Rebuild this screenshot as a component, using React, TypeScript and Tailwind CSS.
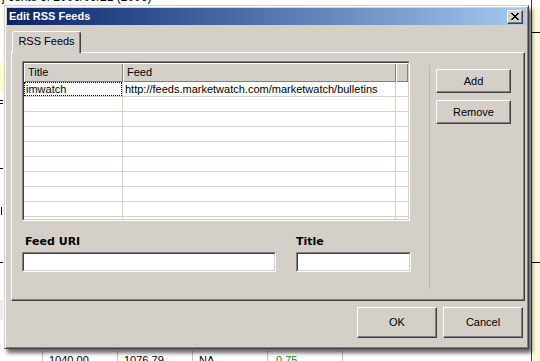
import React from "react";

const rows = Array.from({ length: 10 });

function Sunken({ className = "" }: { className?: string }) {
  return (
    <div className={`border border-t-[#808080] border-l-[#808080] border-r-white border-b-white ${className}`}>
      <div className="h-full w-full border border-t-[#404040] border-l-[#404040] border-r-[#d4d0c8] border-b-[#d4d0c8] bg-white" />
    </div>
  );
}

function Button({ label, className = "" }: { label: string; className?: string }) {
  return (
    <div
      className={`flex items-center justify-center border border-t-white border-l-white border-r-[#404040] border-b-[#404040] bg-[#d4d0c8] shadow-[inset_-1px_-1px_0_#808080] ${className}`}
    >
      {label}
    </div>
  );
}

function FeedTable() {
  return (
    <div className="h-[160px] w-[388px] border border-t-[#808080] border-l-[#808080] border-r-white border-b-white">
      <div className="flex h-full w-full flex-col overflow-hidden border border-t-[#404040] border-l-[#404040] border-r-[#d4d0c8] border-b-[#d4d0c8] bg-white">
        <div className="grid h-[19px] shrink-0 grid-cols-[99px_273px_1fr] bg-[#d4d0c8]">
          <div className="flex items-center pl-[4px] shadow-[inset_1px_1px_0_#fff,inset_-1px_-1px_0_#808080]">Title</div>
          <div className="flex items-center pl-[4px] shadow-[inset_1px_1px_0_#fff,inset_-1px_-1px_0_#808080]">Feed</div>
          <div className="shadow-[inset_1px_1px_0_#fff,inset_-1px_-1px_0_#808080]" />
        </div>
        {rows.map((_, i) => (
          <div key={i} className="grid h-[15px] shrink-0 grid-cols-[99px_273px_1fr]">
            <div className="border-r border-b border-[#d4d0c8]">
              {i === 0 && (
                <div className="flex h-full items-center border border-dotted border-black pl-[1px]">imwatch</div>
              )}
            </div>
            <div className="flex items-center border-r border-b border-[#d4d0c8] pl-[2px]">
              {i === 0 && "http://feeds.marketwatch.com/marketwatch/bulletins"}
            </div>
            <div className="border-b border-[#d4d0c8]" />
          </div>
        ))}
      </div>
    </div>
  );
}

function Backdrop() {
  return (
    <>
      <div className="absolute left-[2px] top-[-9px] whitespace-nowrap text-[12px] text-black">
        j cents of 2006/09/21 (2006)
      </div>
      <div className="absolute left-0 top-[62px] h-[30px] w-[3px] bg-[#fffbd6]" />
      <div className="absolute left-0 top-[100px] h-[1px] w-[3px] bg-black" />
      <div className="absolute left-0 top-[103px] h-[1px] w-[3px] bg-black" />
      <div className="absolute left-0 top-[168px] h-[1px] w-[3px] bg-black" />
      <div className="absolute left-[1px] top-[207px] h-[8px] w-[1px] bg-black" />
      <div className="absolute left-0 top-[262px] h-[1px] w-[3px] bg-black" />
      <div className="absolute left-0 top-[300px] h-[20px] w-[3px] bg-[#eeeeee]" />
      <div className="absolute left-[531px] top-0 h-full w-[1px] bg-[#404040]" />
      <div className="absolute left-[533px] top-[8px] h-full w-[7px] bg-[#fffbd6]" />
      <div className="absolute left-[532px] top-[32px] h-[1px] w-[8px] bg-black" />
      <div className="absolute left-[532px] top-[262px] h-[1px] w-[8px] bg-black" />
      <div className="absolute left-0 top-[351px] flex h-[10px] w-[540px] items-start whitespace-nowrap text-[11px] text-black">
        <div className="h-full w-[43px] border-r border-[#c0c0c0]" />
        <div className="h-full w-[75px] border-r border-[#c0c0c0] pl-[6px] pt-[4px]">1040.00</div>
        <div className="h-full w-[75px] border-r border-[#c0c0c0] pl-[6px] pt-[4px]">1076.79</div>
        <div className="h-full w-[75px] border-r border-[#c0c0c0] pl-[6px] pt-[4px]">NA</div>
        <div className="h-full w-[75px] border-r border-[#c0c0c0] pl-[8px] pt-[4px] text-[#1a8a1a]">0.75</div>
      </div>
    </>
  );
}

export default function App() {
  return (
    <div className="relative h-[361px] w-[540px] overflow-hidden bg-white font-['Liberation_Sans',Arial,sans-serif] text-[11px] leading-none text-black">
      <Backdrop />
      <div className="absolute left-[4px] top-[5px] flex h-[344px] w-[525px] flex-col border border-t-[#d4d0c8] border-l-[#d4d0c8] border-r-[#404040] border-b-[#404040] bg-[#d4d0c8] p-[2px] shadow-[inset_1px_1px_0_#fff,inset_-1px_-1px_0_#808080,3px_4px_4px_rgba(0,0,0,0.6)]">
        {/* title bar */}
        <div className="flex h-[17px] shrink-0 items-center justify-between bg-linear-to-r from-[#0a246a] to-[#a6caf0] pl-[2px] pr-[3px]">
          <span className="font-bold text-white">Edit RSS Feeds</span>
          <div className="flex h-[14px] w-[16px] items-center justify-center border border-t-white border-l-white border-r-[#404040] border-b-[#404040] bg-[#d4d0c8] shadow-[inset_-1px_-1px_0_#808080]">
            <svg width="8" height="7" viewBox="0 0 8 7" shapeRendering="crispEdges">
              <path d="M0 0h2v1h1v1h2v-1h1v-1h2v1h-1v1h-1v1h-1v1h1v1h1v1h1v1h-2v-1h-1v-1h-2v1h-1v1h-2v-1h1v-1h1v-1h1v-1h-1v-1h-1v-1h-1z" fill="#000" />
            </svg>
          </div>
        </div>

        {/* tab strip */}
        <div className="mt-[6px] flex pl-[5px]">
          <div className="relative z-10 -mb-px flex h-[22px] w-[69px] items-center justify-center rounded-t-[3px] border border-b-0 border-t-white border-l-white border-r-[#404040] bg-[#d4d0c8] pb-[2px] shadow-[inset_-1px_0_0_#808080]">
            RSS Feeds
          </div>
        </div>

        {/* tab panel */}
        <div className="ml-[4px] mr-[1px] flex h-[249px] shrink-0 border border-t-white border-l-white border-r-[#404040] border-b-[#404040] shadow-[inset_-1px_-1px_0_#808080]">
          <div className="flex flex-col pl-[10px] pt-[8px]">
            <FeedTable />
            <div className="mt-[14px] flex gap-[20px]">
              <div className="flex flex-col gap-[4px]">
                <span className="font-['DejaVu_Sans',Verdana,sans-serif] text-[11px] font-bold leading-[13px] pl-[3px]">Feed URI</span>
                <Sunken className="h-[20px] w-[254px]" />
              </div>
              <div className="flex flex-col gap-[4px]">
                <span className="font-['DejaVu_Sans',Verdana,sans-serif] text-[11px] font-bold leading-[13px]">Title</span>
                <Sunken className="h-[20px] w-[115px]" />
              </div>
            </div>
          </div>
          <div className="ml-[18px] mt-[12px] h-[224px] w-px bg-[#bcb8b0]" />
          <div className="ml-[6px] flex flex-col gap-[7px] pt-[16px]">
            <Button label="Add" className="h-[24px] w-[75px]" />
            <Button label="Remove" className="h-[24px] w-[75px]" />
          </div>
        </div>

        {/* dialog buttons */}
        <div className="mt-[6px] flex justify-end gap-[6px] pr-[3px]">
          <Button label="OK" className="h-[31px] w-[80px]" />
          <Button label="Cancel" className="h-[31px] w-[80px]" />
        </div>
      </div>
    </div>
  );
}
